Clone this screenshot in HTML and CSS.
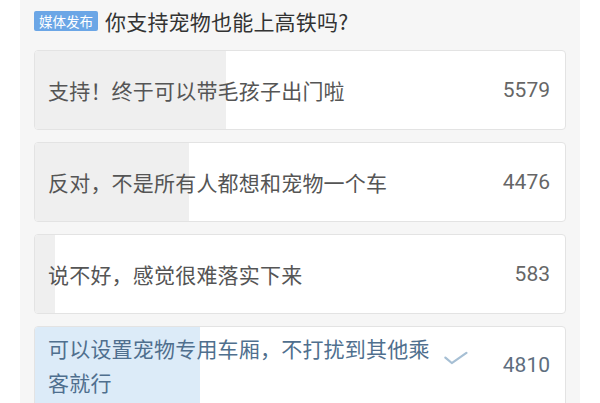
FILE: index.html
```html
<!DOCTYPE html>
<html lang="zh">
<head>
<meta charset="utf-8">
<link rel="stylesheet" href="styles.css">
</head>
<body>
<div class="panel">
  <div class="header">
    <span class="badge">媒体发布</span>
    <span class="title">你支持宠物也能上高铁吗?</span>
  </div>
  <div class="options">
    <div class="option">
      <div class="fill" style="width:36.1%"></div>
      <div class="content">
        <span class="text">支持！终于可以带毛孩子出门啦</span>
        <span class="count">5579</span>
      </div>
    </div>
    <div class="option">
      <div class="fill" style="width:29%"></div>
      <div class="content">
        <span class="text">反对，不是所有人都想和宠物一个车</span>
        <span class="count">4476</span>
      </div>
    </div>
    <div class="option">
      <div class="fill" style="width:3.8%"></div>
      <div class="content">
        <span class="text">说不好，感觉很难落实下来</span>
        <span class="count">583</span>
      </div>
    </div>
    <div class="option selected">
      <div class="fill" style="width:31.1%"></div>
      <div class="content">
        <span class="text">可以设置宠物专用车厢，不打扰到其他乘客就行</span>
        <svg class="check" width="26" height="14" viewBox="0 0 26 14"><path d="M1.5 6.5 L8.5 12.5 L24.5 1.5" fill="none" stroke="#a6bfd4" stroke-width="2.4" stroke-linecap="round" stroke-linejoin="round"/></svg>
        <span class="count">4810</span>
      </div>
    </div>
  </div>
</div>
</body>
</html>
```
FILE: styles.css
```css
html, body {
  margin: 0;
  padding: 0;
  background: #ffffff;
  height: 100%;
  overflow: hidden;
}
body {
  font-family: "Noto Sans CJK SC", "Noto Sans", sans-serif;
}
.panel {
  margin: 0 20px;
  background: #f6f6f6;
  height: 100%;
  padding: 0 14px;
}
.header {
  height: 41px;
  display: flex;
  align-items: center;
}
.badge {
  display: inline-block;
  background: #6ba6e6;
  color: #ffffff;
  font-size: 13.5px;
  line-height: 20px;
  height: 20px;
  padding: 0 5px;
  border-radius: 2px;
  margin-right: 7px;
}
.title {
  font-size: 21px;
  letter-spacing: 0.2px;
  color: #333333;
  line-height: 30px;
}
.options {
  margin-top: 9px;
  display: flex;
  flex-direction: column;
  gap: 12px;
}
.option {
  position: relative;
  background: #ffffff;
  border: 1px solid #e3e3e3;
  border-radius: 4px;
  min-height: 78px;
  overflow: hidden;
}
.fill {
  position: absolute;
  left: 0;
  top: 0;
  bottom: 0;
  background: #efefef;
}
.selected .fill {
  background: #dcebf8;
}
.content {
  position: relative;
  display: flex;
  align-items: center;
  min-height: 78px;
  padding: 0 15px 0 13px;
}
.text {
  flex: 1;
  font-size: 21px;
  letter-spacing: 0.2px;
  line-height: 34px;
  color: #555555;
}
.count {
  margin-left: auto;
  font-family: "Roboto", "Liberation Sans", sans-serif;
  font-size: 21px;
  line-height: 30px;
  color: #666666;
}
.selected .content {
  align-items: flex-start;
  padding-top: 4px;
  padding-bottom: 8px;
}
.selected .text {
  color: #4f6f8e;
  flex: 0 0 388px;
  margin-right: 8px;
}
.selected .check {
  margin-top: 20px;
  margin-right: 35px;
}
.selected .count {
  margin-top: 19px;
  color: #5e6e7e;
}
```
